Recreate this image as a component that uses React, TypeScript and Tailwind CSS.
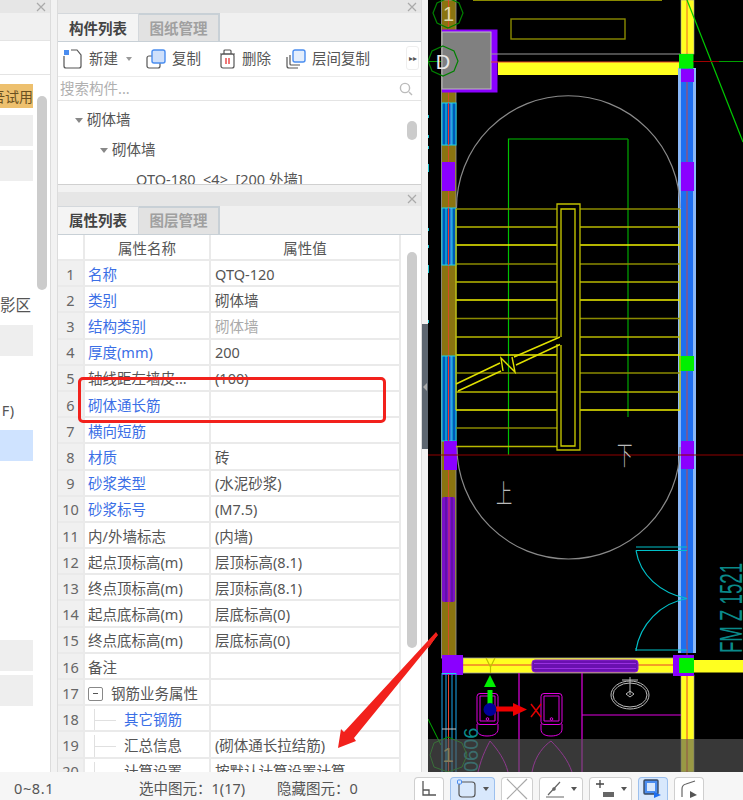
import type { ReactNode } from 'react'

const rows: { n: number; name: string; value?: string; link?: boolean; dim?: boolean }[] = [
  { n: 1, name: '名称', value: 'QTQ-120', link: true },
  { n: 2, name: '类别', value: '砌体墙', link: true },
  { n: 3, name: '结构类别', value: '砌体墙', link: true, dim: true },
  { n: 4, name: '厚度(mm)', value: '200', link: true },
  { n: 5, name: '轴线距左墙皮...', value: '(100)' },
  { n: 6, name: '砌体通长筋', link: true },
  { n: 7, name: '横向短筋', link: true },
  { n: 8, name: '材质', value: '砖', link: true },
  { n: 9, name: '砂浆类型', value: '(水泥砂浆)', link: true },
  { n: 10, name: '砂浆标号', value: '(M7.5)', link: true },
  { n: 11, name: '内/外墙标志', value: '(内墙)' },
  { n: 12, name: '起点顶标高(m)', value: '层顶标高(8.1)' },
  { n: 13, name: '终点顶标高(m)', value: '层顶标高(8.1)' },
  { n: 14, name: '起点底标高(m)', value: '层底标高(0)' },
  { n: 15, name: '终点底标高(m)', value: '层底标高(0)' },
  { n: 16, name: '备注' },
]

function CloseBar({ tall }: { tall?: boolean }) {
  return (
    <div className={`flex shrink-0 items-center justify-end bg-[#e6e6e6] pr-[4px] ${tall ? 'h-[14px]' : 'h-[13px]'}`}>
      <svg width="10" height="10" viewBox="0 0 10 10" stroke="#aaa" strokeWidth="1.2">
        <path d="M1 1l8 8M9 1l-8 8" />
      </svg>
    </div>
  )
}

function Tabs({ active, other, raised }: { active: string; other: string; raised?: boolean }) {
  return (
    <div className="flex h-[29px] shrink-0 border-b border-[#c8d0d6] bg-[#f0f0f0] text-[14.5px] font-bold">
      <div className={`flex w-[81px] items-center justify-center border-t border-r border-[#d4d8dc] bg-[#f4f4f4] text-[#444] ${raised ? '' : 'pt-[2px]'}`}>{active}</div>
      <div className={`flex w-[81px] items-center justify-center border-t-2 border-r-2 border-[#c8d0d6] bg-[#e2e2e2] text-[#a0a0a0] ${raised ? '' : 'pt-[1px]'}`}>{other}</div>
    </div>
  )
}

function ToolItem({ icon, label, className }: { icon: ReactNode; label: string; className: string }) {
  return (
    <div className={`flex items-center gap-[6px] ${className}`}>
      {icon}
      <span className="text-[14.5px] text-[#555]">{label}</span>
    </div>
  )
}

function NewIcon() {
  return (
    <svg width="20" height="20" viewBox="0 0 20 20" fill="none">
      <path d="M1 7v10a2 2 0 0 0 2 2h13a2 2 0 0 0 2-2V6l-4-5H8" stroke="#555" strokeWidth="1.2" />
      <rect x="1" y="1" width="5" height="5" fill="#4a8df0" />
    </svg>
  )
}

function CopyIcon() {
  return (
    <svg width="20" height="20" viewBox="0 0 20 20" fill="none">
      <rect x="1" y="7" width="13" height="12" rx="2" stroke="#555" strokeWidth="1.2" />
      <rect x="6" y="1" width="13" height="13" rx="2" fill="#cfe0fb" stroke="#4a8df0" strokeWidth="1.4" />
    </svg>
  )
}

function TrashIcon() {
  return (
    <svg width="17" height="20" viewBox="0 0 17 20" fill="none">
      <path d="M1 5h15M5 5V2a1 1 0 0 1 1-1h5a1 1 0 0 1 1 1v3" stroke="#555" strokeWidth="1.2" />
      <rect x="2" y="5" width="13" height="14" rx="2" stroke="#555" strokeWidth="1.2" />
      <path d="M7 9v6M10 9v6" stroke="#e83030" strokeWidth="1.3" />
    </svg>
  )
}

function StackIcon() {
  return (
    <svg width="20" height="20" viewBox="0 0 20 20" fill="none">
      <path d="M1 8v9a2 2 0 0 0 2 2h9M4 6v9a1 1 0 0 0 1 1h9" stroke="#555" strokeWidth="1.2" />
      <rect x="7" y="1" width="12" height="12" rx="2" fill="#e4eefc" stroke="#4a8df0" strokeWidth="1.4" />
    </svg>
  )
}

function ComponentPanel() {
  return (
    <div className="flex h-[185px] shrink-0 flex-col overflow-hidden border-b border-[#d0d0d0] bg-white">
      <CloseBar />
      <Tabs active="构件列表" other="图纸管理" />
      <div className="relative flex h-[35px] shrink-0 items-center border-b border-[#ececec] pl-[5px]">
        <ToolItem icon={<NewIcon />} label="新建" className="" />
        <span className="ml-[8px] h-0 w-0 border-x-[3.5px] border-t-[4px] border-x-transparent border-t-[#999]" />
        <ToolItem icon={<CopyIcon />} label="复制" className="ml-[14px]" />
        <ToolItem icon={<TrashIcon />} label="删除" className="ml-[18px]" />
        <ToolItem icon={<StackIcon />} label="层间复制" className="ml-[15px]" />
        <div className="absolute right-[2px] top-[4px] flex h-[24px] w-[13px] items-center justify-center rounded-[3px] border border-[#eee] text-[8px] text-[#555]">▸▸</div>
      </div>
      <div className="flex h-[24px] shrink-0 items-center justify-between border-b border-[#e4e4e4] pl-[2px] pr-[8px]">
        <span className="text-[14.5px] text-[#b0b0b0]">搜索构件...</span>
        <svg width="14" height="14" viewBox="0 0 14 14" fill="none" stroke="#bbb" strokeWidth="1.4">
          <circle cx="6" cy="6" r="4.6" />
          <path d="M10 10l3 3" />
        </svg>
      </div>
      <div className="relative flex-1 overflow-hidden pt-[4px] text-[14.5px] text-[#555]">
        <div className="flex h-[30px] items-center pl-[17px]">
          <span className="mr-[4px] h-0 w-0 border-x-[4px] border-t-[5px] border-x-transparent border-t-[#888]" />
          砌体墙
        </div>
        <div className="flex h-[30px] items-center pl-[42px]">
          <span className="mr-[4px] h-0 w-0 border-x-[4px] border-t-[5px] border-x-transparent border-t-[#888]" />
          砌体墙
        </div>
        <div className="flex h-[30px] items-center whitespace-pre pl-[78px]">QTQ-180  &lt;4&gt;  [200 外墙]</div>
        <div className="absolute right-[4px] top-[20px] h-[19px] w-[10px] rounded-full bg-[#cccccc]" />
      </div>
    </div>
  )
}

const cell = 'flex items-center border-b-2 border-r-2 border-[#eaeaea] overflow-hidden whitespace-nowrap pt-[3px]'

function Row({ n, name, value, nameClass, valueClass }: { n: number; name: ReactNode; value?: string; nameClass?: string; valueClass?: string }) {
  return (
    <div className="grid h-[26.2px] shrink-0 grid-cols-[27px_126px_190px] text-[14.5px] text-[#555]">
      <div className={`${cell} justify-center bg-[#f0f0f0] text-[#666]`}>{n}</div>
      <div className={`${cell} pl-[3px] ${nameClass ?? ''}`}>{name}</div>
      <div className={`${cell} pl-[4px] ${valueClass ?? ''}`}>{value}</div>
    </div>
  )
}

function TreeTick() {
  return (
    <span className="relative mr-[8px] h-full w-[28px] shrink-0">
      <span className="absolute bottom-0 left-[6px] top-0 w-px bg-[#e0e0e0]" />
      <span className="absolute left-[6px] right-0 top-1/2 h-px bg-[#e0e0e0]" />
    </span>
  )
}

function PropertyPanel() {
  return (
    <div className="mt-[7px] flex min-h-0 flex-1 flex-col overflow-hidden bg-white">
      <CloseBar tall />
      <Tabs active="属性列表" other="图层管理" raised />
      <div className="relative flex min-h-0 flex-1 flex-col overflow-hidden">
        <div className="grid h-[26px] shrink-0 grid-cols-[27px_126px_190px] text-[14.5px] text-[#555]">
          <div className={`${cell} bg-white`} />
          <div className={`${cell} justify-center`}>属性名称</div>
          <div className={`${cell} justify-center`}>属性值</div>
        </div>
        {rows.map((r) => (
          <Row
            key={r.n}
            n={r.n}
            name={r.name}
            value={r.value}
            nameClass={r.link ? 'text-[#3b6fe6]' : ''}
            valueClass={r.dim ? 'text-[#aaa]' : ''}
          />
        ))}
        <Row
          n={17}
          name={
            <>
              <span className="mr-[8px] flex h-[14px] w-[15px] items-center justify-center rounded-[2px] border border-[#888]">
                <span className="h-px w-[5px] bg-[#555]" />
              </span>
              钢筋业务属性
            </>
          }
        />
        <Row n={18} name={<><TreeTick /><span className="text-[#3b6fe6]">其它钢筋</span></>} />
        <Row n={19} name={<><TreeTick />汇总信息</>} value="(砌体通长拉结筋)" />
        <Row n={20} name={<><TreeTick />计算设置</>} value="按默认计算设置计算" />
        <div className="absolute right-[4px] top-[17px] h-[396px] w-[10px] rounded-full bg-[#cccccc]" />
      </div>
    </div>
  )
}

function LeftPanel() {
  return (
    <div className="relative flex w-[51px] shrink-0 flex-col overflow-hidden border-r border-[#dcdcdc] bg-white">
      <CloseBar />
      <div className="h-[28px] shrink-0 border-b border-[#e4e4e4] bg-[#f0f0f0]" />
      <div className="h-[34px] shrink-0 border-b border-[#e4e4e4]" />
      <div className="mt-[9px] flex h-[24px] w-[33px] items-center justify-end overflow-hidden whitespace-nowrap bg-[#edc06e] text-[14px] text-[#6a5020]">
        <span className="shrink-0">吾试用</span>
      </div>
      <div className="mt-[7px] h-[31px] w-[33px] bg-[#eeeeee]" />
      <div className="mt-[4px] h-[31px] w-[33px] bg-[#eeeeee]" />
      <div className="mt-[113px] flex h-[24px] w-[31px] items-center justify-end text-[15.5px] text-[#555]">影区</div>
      <div className="mt-[7px] h-[31px] w-[33px] bg-[#eeeeee]" />
      <div className="mt-[43px] flex h-[24px] w-[14px] items-center justify-end text-[14.5px] text-[#555]">F)</div>
      <div className="mt-[7px] h-[31px] w-[33px] bg-[#cfe3ff]" />
      <div className="mt-[179px] h-[31px] w-[33px] bg-[#eeeeee]" />
      <div className="mt-[4px] h-[31px] w-[33px] bg-[#eeeeee]" />
      <div className="absolute left-[37px] top-[96px] h-[194px] w-[10px] rounded-full bg-[#cccccc]" />
    </div>
  )
}

const treadYs = [209, 227, 245, 264, 282, 300, 318.5, 337, 355, 373, 392, 410, 428, 446.5]
const treadColors = ['#8a8a00', '#b8b800', '#f0f000']

function LeftWallWindow({ y, h }: { y: number; h: number }) {
  return (
    <g>
      <rect x="442" y={y} width="14" height={h} fill="#0058b8" stroke="#19d6e6" strokeWidth="1" />
      <path d={`M446 ${y}V${y + h}M452 ${y}V${y + h}`} stroke="#19d6e6" strokeWidth="1" />
      <path d={`M448.5 ${y}V${y + h}`} stroke="#f03030" strokeWidth="1" />
      <path d={`M451 ${y}V${y + h}`} stroke="#5ab0ff" strokeWidth="1" />
    </g>
  )
}

function CadCanvas() {
  return (
    <svg width="315" height="772" viewBox="428 0 315 772" className="block shrink-0 bg-black" fill="none">
      {/* left edge ticks */}
      <path d="M428.5 115v3M428.5 135v3M428.5 146v3M428.5 164v8M428.5 228v3M428.5 245v3M428.5 265v8M428.5 320v3" stroke="#19c4d0" />
      {/* top olive */}
      <path d="M473 0.5H662" stroke="#8a8a00" />
      <rect x="511" y="19" width="114" height="20" stroke="#8a8a00" strokeWidth="1.4" />
      {/* left wall */}
      <rect x="441.5" y="0" width="14.5" height="658" fill="#8a7410" stroke="#9a9a9a" strokeWidth="0.8" />
      <path d="M448.5 0V658" stroke="#e8402a" strokeWidth="0.8" />
      <LeftWallWindow y={103} h={42} />
      <LeftWallWindow y={208} h={57} />
      <LeftWallWindow y={356} h={85} />
      <rect x="442" y="162" width="13" height="29" fill="#8a00ff" />
      <rect x="444" y="441" width="13" height="29" fill="#8a00ff" />
      <rect x="442" y="497" width="13" height="105" rx="2" fill="#7a10c8" />
      <path d="M446 497V602M452 497V602" stroke="#4a1090" />
      <path d="M449 497V602" stroke="#e83060" />
      {/* column */}
      <rect x="442" y="29.5" width="55.5" height="63" fill="#8a00ff" />
      <rect x="442" y="32" width="49" height="57" fill="#808080" stroke="#bdbdbd" strokeWidth="1" />
      {/* beam top */}
      <path d="M491 54H680" stroke="#9a9a9a" strokeWidth="1.2" />
      <rect x="498" y="62" width="181" height="13" fill="#ffff20" />
      <path d="M491 62H679" stroke="#e8402a" />
      {/* right wall */}
      <rect x="681" y="0" width="13" height="54" fill="#ffff20" stroke="#a0a0a0" strokeWidth="0.6" />
      <rect x="678" y="68" width="18" height="585" fill="#8ab8f8" />
      <rect x="681" y="68" width="12" height="585" fill="#1f6ff0" />
      <path d="M687 0V772" stroke="#e8402a" strokeWidth="0.8" />
      <rect x="681" y="69" width="13" height="13" fill="#8a00ff" />
      <rect x="681" y="162" width="13" height="29" fill="#8a00ff" />
      <rect x="681" y="441" width="13" height="28" fill="#8a00ff" />
      <rect x="679" y="54" width="14.5" height="14.5" fill="#00f000" />
      <rect x="679" y="356" width="15" height="15" fill="#00f000" />
      {/* axis lines */}
      <path d="M687 0L743 142" stroke="#00c800" strokeWidth="1.2" />
      <path d="M693 61.5H743" stroke="#00a000" />
      <path d="M693 61.5H719" stroke="#a00000" />
      <path d="M428 61.5H441" stroke="#00a000" />
      {/* stadium */}
      <path d="M456.5 208A111.5 112 0 0 1 680 208" stroke="#8a8a8a" strokeWidth="1.2" />
      <path d="M457 447A111.5 112 0 0 0 680 447" stroke="#8a8a8a" strokeWidth="1.2" />
      {/* green walk line */}
      <path d="M508.5 455V139H628" stroke="#00c000" strokeWidth="1.2" />
      <path d="M628 139V417" stroke="#009000" strokeWidth="1.4" />
      {/* treads */}
      {treadYs.map((y, i) => (
        <path key={y} d={i < 12 ? `M456 ${y}H557M580 ${y}H680` : `M456 ${y}H557`} stroke={treadColors[i % 3]} strokeWidth="1.4" />
      ))}
      <path d="M456 209V410M680 209V410" stroke="#c0c000" strokeWidth="1.3" />
      {/* hand rail */}
      <path d="M557 344V450H580V204H557V337" stroke="#c0c000" strokeWidth="1.3" />
      <path d="M561 345V446H575V209H561V337" stroke="#d0d000" strokeWidth="1.3" />
      {/* break line with its N mark */}
      <path d="M456 384L500 363M514 357L560 337M458 391L501 371M516 365L560 344.5" stroke="#e0e000" strokeWidth="1.4" />
      <path d="M503 371L501 358L515 372L512 357" stroke="#e0e000" strokeWidth="1.4" />
      {/* red axis */}
      <path d="M428 455H743" stroke="#900000" />
      {/* up / down */}
      <text transform="translate(496 503) scale(0.65 1.05)" fontSize="25" fontFamily="Noto Sans CJK SC" fill="#bbbbbb" fontWeight="300">上</text>
      <text transform="translate(617 465) scale(0.62 1.05)" fontSize="25" fontFamily="Noto Sans CJK SC" fill="#bbbbbb" fontWeight="300">下</text>
      {/* lower beam */}
      <rect x="463" y="658" width="216" height="15" fill="#ffff20" stroke="#a0a0a0" strokeWidth="0.8" />
      <path d="M463 665H680" stroke="#e8402a" />
      <rect x="532" y="660" width="106" height="12" rx="3" fill="#6a10b0" stroke="#8a20d0" />
      <path d="M534 663.5H636M534 668.5H636" stroke="#9a30e0" />
      <rect x="694" y="660" width="49" height="12.5" fill="#ffff20" />
      <rect x="681" y="675" width="13" height="97" fill="#ffff20" stroke="#a0a0a0" strokeWidth="0.6" />
      <path d="M687 675V772" stroke="#e8402a" />
      {/* corners */}
      <rect x="442" y="655" width="21" height="20" fill="#8a00ff" />
      <rect x="673" y="655" width="21" height="21" fill="#8a00ff" />
      <rect x="679" y="658" width="15" height="15" fill="#00f000" />
      {/* left lower */}
      <path d="M442 673V772M446 673V772M452 673V772M456 673V772" stroke="#19a8f0" />
      <path d="M448.5 673V772" stroke="#e8402a" />
      <path d="M442 673.5H456" stroke="#19d6e6" />
      <path d="M442 729H456" stroke="#c8c8c8" />
      {/* door */}
      <path d="M636 547H687M636 550.5H687M636 550.5C640 575 660 593 687 598.5C660 603 640 625 636 650M636 650H687M636 648V651" stroke="#00c0c8" strokeWidth="1.2" />
      <text transform="translate(742 653) rotate(-90)" fontSize="32" fontFamily="Liberation Sans" fill="#0a8a8a" textLength="90" lengthAdjust="spacingAndGlyphs">FM Z 1521</text>
      {/* fixtures */}
      <path d="M519 673V772M582 673V772M582 715H681" stroke="#e000e0" strokeWidth="1.2" />
      {[477, 541].map((x) => (
        <g key={x} stroke="#e000e0" strokeWidth="1">
          <rect x={x} y="693.5" width="21" height="31" rx="3" />
          <path d={`M${x} 724v5c0 5 4 7 10 7s11-2 11-7v-5M${x + 3} 696v25h15v-25z`} />
          <circle cx={x + 10.5} cy="719" r="1.3" />
        </g>
      ))}
      <g stroke="#bdbdbd" strokeWidth="1">
        <ellipse cx="630" cy="695" rx="19" ry="14" />
        <ellipse cx="630" cy="695" rx="17" ry="12" />
        <path d="M622 680h16M630 677v18M626 694l4-3 4 3-4 3z" />
      </g>
      {/* gizmo */}
      <path d="M490 709V690" stroke="#00f000" strokeWidth="5" />
      <path d="M484 687L490 675L496 687Z" fill="#00f000" />
      <path d="M490 709H514" stroke="#f00000" strokeWidth="5" />
      <path d="M513 703L527 709.5L513 716Z" fill="#f00000" />
      <circle cx="490" cy="709.5" r="6.5" fill="#00009a" />
      <path d="M486 658L490.5 667L495 658M490.5 667V673" stroke="#c0c000" strokeWidth="1.2" />
      <path d="M531 704L541 717M541 704L531 717" stroke="#e00000" strokeWidth="1.5" />
      <path d="M428 648L437 635" stroke="#f03020" strokeWidth="1" />
      <path d="M428 719L441 745" stroke="#00b000" strokeWidth="1" />
      {/* lower doors */}
      <path d="M478 772C482 755 488 745 490 741C498 750 505 760 508 772M532 772C535 755 545 745 551 741C560 750 568 760 572 772" stroke="#e000e0" />
      <text transform="translate(478 772) rotate(-90)" fontSize="20" fontFamily="Liberation Sans" fill="#0a8a8a">0606</text>
      <path d="M448 737L462 743L467 755L462 767L448 772L434 767L430 755L434 743Z" stroke="#009000" />
      <text x="448" y="762" fontSize="20" fontFamily="Liberation Sans" fill="#c8b860" textAnchor="middle">1</text>
      {/* dim band */}
      <rect x="428" y="739" width="315" height="33" fill="#5a5a5a" fillOpacity="0.62" />
      {/* axis bubbles */}
      <path d="M448 -2L459 3L463 13L459 23L448 28L437 23L433 13L437 3Z" stroke="#008000" strokeWidth="1.2" />
      <text x="448.5" y="21" fontSize="20" fontFamily="Liberation Sans" fill="#e0dcb0" textAnchor="middle">1</text>
      <path d="M443 46L454 51L458 61L454 71L443 76L432 71L428 61L432 51Z" stroke="#008000" strokeWidth="1.2" />
      <text x="443" y="69" fontSize="20" fontFamily="Liberation Sans" fill="#e8e8e8" textAnchor="middle">D</text>
    </svg>
  )
}

function ToolButton({ w, active, caret, children }: { w: string; active?: boolean; caret?: boolean; children: ReactNode }) {
  return (
    <div className={`flex h-[23px] items-center justify-center gap-[6px] overflow-hidden rounded-t-[4px] border border-b-0 ${w} ${active ? 'border-[#9cc0ee] bg-[#d8e8fc]' : 'border-[#cfcfcf] bg-white'}`}>
      {children}
      {caret && <span className="h-0 w-0 border-x-[3.5px] border-t-[4px] border-x-transparent border-t-[#555]" />}
    </div>
  )
}

function StatusBar() {
  return (
    <div className="flex h-[28px] shrink-0 items-end bg-[#f6f6f6] text-[14.5px] text-[#555]">
      <span className="ml-[14px] w-[125px] tracking-[0.6px]">0~8.1</span>
      <span className="w-[138px]">选中图元：1(17)</span>
      <span className="w-[137px]">隐藏图元：0</span>
      <div className="flex items-end gap-[6px]">
        <ToolButton w="w-[30px]">
          <svg width="18" height="18" viewBox="0 0 18 18" fill="none" stroke="#555" strokeWidth="1.3"><path d="M3 1v14h13M3 10h6v5" /></svg>
        </ToolButton>
        <ToolButton w="w-[45px]" active caret>
          <svg width="20" height="20" viewBox="0 0 20 20" fill="none"><rect x="2" y="3" width="16" height="15" rx="3" stroke="#555" strokeWidth="1.2" /><rect x="0.5" y="1" width="4" height="4" rx="1" fill="#d8e8fc" stroke="#4a8df0" /></svg>
        </ToolButton>
        <ToolButton w="w-[32px]">
          <svg width="22" height="22" viewBox="0 0 22 22" fill="none" stroke="#aaa" strokeWidth="1.2"><path d="M1 1l20 20M21 1L1 21" /></svg>
        </ToolButton>
        <ToolButton w="w-[44px]" caret>
          <svg width="20" height="20" viewBox="0 0 20 20" fill="none" stroke="#666" strokeWidth="1.2"><path d="M1 18H19M3 16L15 3" /><circle cx="9" cy="10" r="1.2" fill="#666" /></svg>
        </ToolButton>
        <ToolButton w="w-[43px]" caret>
          <svg width="20" height="20" viewBox="0 0 20 20" fill="none"><path d="M1 5h8M5 1v8" stroke="#444" strokeWidth="1.3" /><rect x="8" y="13" width="11" height="5" fill="#666" /></svg>
        </ToolButton>
        <ToolButton w="w-[30px]" active>
          <svg width="20" height="20" viewBox="0 0 20 20" fill="none"><rect x="1" y="1" width="14" height="14" rx="1" fill="#4a8df0" stroke="#3a4a60" strokeWidth="1.4" /><rect x="4" y="4" width="8" height="8" fill="#d8e8fc" /><path d="M11 13l7 3-7 3z" fill="#1f6ff0" /></svg>
        </ToolButton>
        <ToolButton w="w-[30px]">
          <svg width="20" height="20" viewBox="0 0 20 20" fill="none" stroke="#666" strokeWidth="1.2"><path d="M3 18V10Q3 6 7 5L16 2" /><path d="M11 12l7 4-7 3z" fill="#555" stroke="none" /></svg>
        </ToolButton>
      </div>
    </div>
  )
}

export default function App() {
  return (
    <div className="relative flex h-[800px] w-[743px] flex-col overflow-hidden bg-[#f2f2f2] font-['Noto_Sans','Noto_Sans_CJK_SC',sans-serif]">
      <div className="flex h-[772px] shrink-0">
        <LeftPanel />
        <div className="ml-[6px] flex w-[365px] shrink-0 flex-col border-x border-[#dcdcdc]">
          <ComponentPanel />
          <PropertyPanel />
        </div>
        <div className="flex w-[6px] shrink-0 flex-col justify-center pt-[1px]">
          <div className="flex h-[125px] w-[6px] items-center justify-center bg-[#5d6670]">
            <span className="h-0 w-0 border-y-[4px] border-r-[4px] border-y-transparent border-r-[#aaa]" />
          </div>
        </div>
        <CadCanvas />
      </div>
      <StatusBar />
      {/* red annotation over the screenshot */}
      <div className="absolute left-[78px] top-[377px] h-[46px] w-[308px] rounded-[5px] border-[3px] border-[#f2211c]" />
      <svg className="pointer-events-none absolute left-0 top-0" width="743" height="800" viewBox="0 0 743 800">
        <path d="M438 635L354 738L356 741L338 748L341 729L344 732L436 632Z" fill="#f2211c" />
      </svg>
    </div>
  )
}
